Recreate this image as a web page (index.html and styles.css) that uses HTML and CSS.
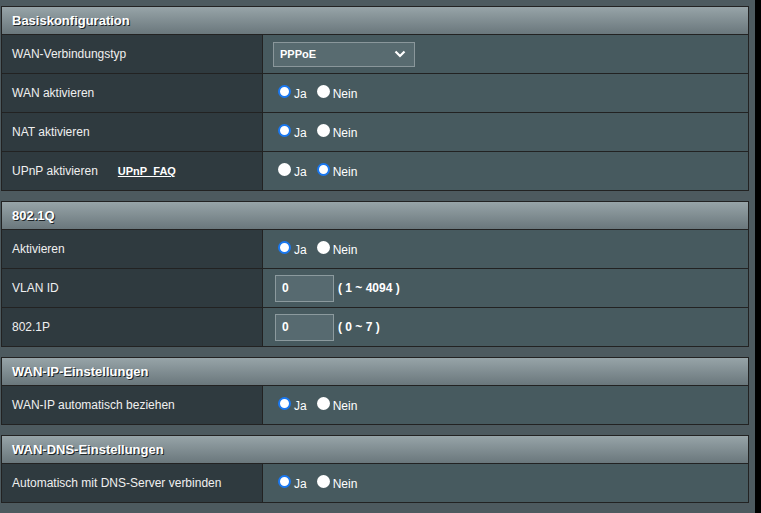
FILE: index.html
```html
<!DOCTYPE html>
<html>

<head>
    <title>WAN</title>
    <link rel="stylesheet" href="styles.css">
</head>

<body>
    <div class="page">
        <div class="section">
            <div class="section-header">Basiskonfiguration</div>
            <div class="row">
                <div class="label">WAN-Verbindungstyp</div>
                <div class="value">
                    <div class="select">
                        <span>PPPoE</span>
                        <svg width="12" height="8" viewBox="0 0 12 8"><path d="M1.5 1.5 L6 6 L10.5 1.5" fill="none" stroke="#fff" stroke-width="2.2"/></svg>
                    </div>
                </div>
            </div>
            <div class="row">
                <div class="label">WAN aktivieren</div>
                <div class="value">
                    <label class="radio"><input type="radio" name="wan" checked> Ja</label>
                    <label class="radio"><input type="radio" name="wan"> Nein</label>
                </div>
            </div>
            <div class="row">
                <div class="label">NAT aktivieren</div>
                <div class="value">
                    <label class="radio"><input type="radio" name="nat" checked> Ja</label>
                    <label class="radio"><input type="radio" name="nat"> Nein</label>
                </div>
            </div>
            <div class="row">
                <div class="label">UPnP aktivieren <a class="faq" href="#">UPnP&nbsp;&nbsp;FAQ</a></div>
                <div class="value">
                    <label class="radio"><input type="radio" name="upnp"> Ja</label>
                    <label class="radio"><input type="radio" name="upnp" checked> Nein</label>
                </div>
            </div>
        </div>

        <div class="section">
            <div class="section-header">802.1Q</div>
            <div class="row">
                <div class="label">Aktivieren</div>
                <div class="value">
                    <label class="radio"><input type="radio" name="vlan" checked> Ja</label>
                    <label class="radio"><input type="radio" name="vlan"> Nein</label>
                </div>
            </div>
            <div class="row">
                <div class="label">VLAN ID</div>
                <div class="value">
                    <input class="text-input" type="text" value="0">
                    <span class="hint">( 1 ~ 4094 )</span>
                </div>
            </div>
            <div class="row">
                <div class="label">802.1P</div>
                <div class="value">
                    <input class="text-input" type="text" value="0">
                    <span class="hint">( 0 ~ 7 )</span>
                </div>
            </div>
        </div>

        <div class="section">
            <div class="section-header">WAN-IP-Einstellungen</div>
            <div class="row">
                <div class="label">WAN-IP automatisch beziehen</div>
                <div class="value">
                    <label class="radio"><input type="radio" name="ip" checked> Ja</label>
                    <label class="radio"><input type="radio" name="ip"> Nein</label>
                </div>
            </div>
        </div>

        <div class="section">
            <div class="section-header">WAN-DNS-Einstellungen</div>
            <div class="row">
                <div class="label">Automatisch mit DNS-Server verbinden</div>
                <div class="value">
                    <label class="radio"><input type="radio" name="dns" checked> Ja</label>
                    <label class="radio"><input type="radio" name="dns"> Nein</label>
                </div>
            </div>
        </div>
    </div>
</body>

</html>
```

FILE: styles.css
```css
html {
    background-color: #000;
}

body {
    margin: 0;
    width: 755px;
    min-height: 513px;
    background-color: #4d5a5f;
    font-family: "Liberation Sans", Arial, sans-serif;
    font-size: 12px;
    color: #fff;
}

.page {
    padding: 6px 0 0 1px;
    width: 748px;
}

.section {
    border: 1px solid #222;
    margin-bottom: 10px;
}

.section-header {
    height: 27px;
    line-height: 27px;
    padding-left: 10px;
    font-size: 13px;
    font-weight: bold;
    color: #fff;
    text-shadow: 1px 1px 0 #1c2427;
    background: linear-gradient(to bottom, #97a4a8, #6a777c);
    border-bottom: 1px solid #222;
}

.row {
    display: flex;
    height: 38px;
    border-bottom: 1px solid #222;
}

.row:last-child {
    border-bottom: none;
}

.label {
    width: 250px;
    padding-left: 10px;
    display: flex;
    align-items: center;
    background-color: #2f3a3f;
    border-right: 1px solid #222;
    color: #f0f0f0;
}

.value {
    flex: 1;
    display: flex;
    align-items: center;
    padding-left: 10px;
    background-color: #475a5f;
}

.faq {
    margin-left: 20px;
    font-size: 11px;
    font-weight: bold;
    color: #fff;
}

.select {
    width: 126px;
    height: 23px;
    padding: 0 8px 0 6px;
    display: flex;
    align-items: center;
    justify-content: space-between;
    background-color: #586b70;
    border: 1px solid #8a979b;
    font-size: 11px;
    font-weight: bold;
}

.radio {
    display: flex;
    align-items: center;
    margin-right: 5px;
    margin-top: 1px;
}

.radio input {
    appearance: none;
    width: 13px;
    height: 13px;
    margin: -4px 3px 0 5px;
    border-radius: 50%;
    background-color: #fff;
    box-sizing: border-box;
}

.radio input:checked {
    border: 2px solid #1a78f0;
}

.text-input {
    width: 59px;
    height: 27px;
    margin: 0 0 0 2px;
    padding: 0 6px;
    box-sizing: border-box;
    background-color: #576a70;
    border: 1px solid #8c9a9e;
    color: #fff;
    font-family: "Liberation Sans", Arial, sans-serif;
    font-size: 12px;
    font-weight: bold;
}

.hint {
    margin-left: 4px;
    font-weight: bold;
}
```
